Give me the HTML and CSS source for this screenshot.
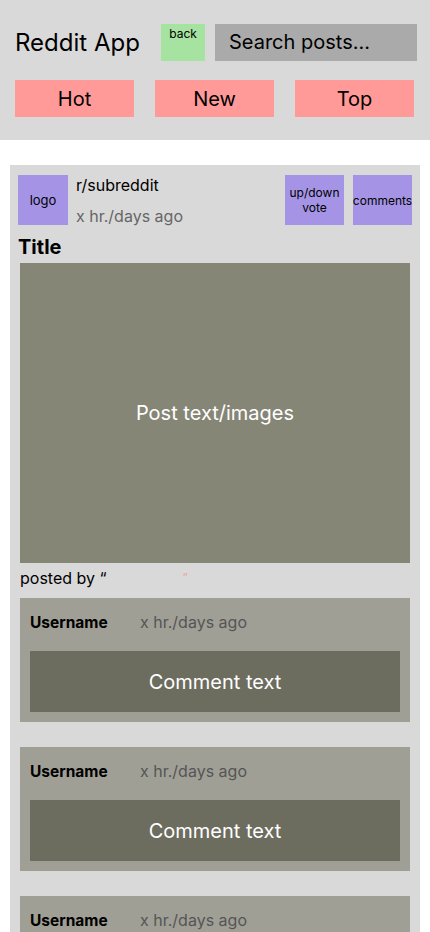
FILE: index.html
```html
<!DOCTYPE html>
<html>
<head>
<meta charset="utf-8">
<link rel="stylesheet" href="styles.css">
</head>
<body>
<header class="top">
  <div class="row1">
    <h1 class="app-title">Reddit App</h1>
    <div class="back">back</div>
    <div class="search">Search posts...</div>
  </div>
  <div class="row2">
    <div class="tab">Hot</div>
    <div class="tab">New</div>
    <div class="tab">Top</div>
  </div>
</header>
<main class="card">
  <div class="card-head">
    <div class="logo">logo</div>
    <div class="meta">
      <div class="sub">r/subreddit</div>
      <div class="time">x hr./days ago</div>
    </div>
    <div class="sq vote">up/down<br>vote</div>
    <div class="sq comments">comments</div>
  </div>
  <div class="title">Title</div>
  <div class="media">Post text/images</div>
  <div class="posted">posted by “<span class="q">”</span></div>
  <div class="comment">
    <div class="c-head"><span class="user">Username</span><span class="c-time">x hr./days ago</span></div>
    <div class="c-text">Comment text</div>
  </div>
  <div class="comment">
    <div class="c-head"><span class="user">Username</span><span class="c-time">x hr./days ago</span></div>
    <div class="c-text">Comment text</div>
  </div>
  <div class="comment">
    <div class="c-head"><span class="user">Username</span><span class="c-time">x hr./days ago</span></div>
    <div class="c-text">Comment text</div>
  </div>
</main>
</body>
</html>
```
FILE: styles.css
```css
* { box-sizing: border-box; }
body {
  margin: 0;
  background: #ffffff;
  font-family: Inter, "Noto Sans", sans-serif;
  color: #000;
}
.top {
  background: #d9d9d9;
  height: 140px;
  padding: 24px 0 0 15px;
}
.row1 {
  display: flex;
  align-items: stretch;
  height: 37px;
}
.app-title {
  margin: 0;
  width: 146px;
  flex: none;
  font-size: 24px;
  font-weight: 400;
  line-height: 37px;
}
.back {
  width: 44px;
  background: #a6e3a0;
  font-size: 12px;
  text-align: center;
  line-height: 20px;
}
.search {
  margin-left: 10px;
  width: 202px;
  background: #aaaaaa;
  font-size: 20px;
  line-height: 37px;
  padding-left: 14px;
}
.row2 {
  display: flex;
  gap: 21px;
  margin-top: 19px;
}
.tab {
  width: 119px;
  height: 37px;
  background: #ff9a99;
  font-size: 20px;
  line-height: 37px;
  padding-top: 1px;
  text-align: center;
}
.card {
  margin: 25px 10px 0;
  background: #d9d9d9;
  padding: 10px 0 40px;
}
.card-head {
  display: flex;
  padding: 0 8px;
  height: 50px;
}
.logo {
  width: 50px;
  height: 50px;
  background: #a594e6;
  font-size: 13px;
  display: flex;
  align-items: center;
  justify-content: center;
}
.meta {
  margin-left: 8px;
  flex: 1;
  font-size: 16px;
}
.sub { line-height: 20px; }
.time { color: #666; margin-top: 11px; line-height: 20px; }
.sq {
  width: 59px;
  height: 50px;
  background: #a594e6;
  font-size: 12px;
  line-height: 15px;
  display: flex;
  align-items: center;
  justify-content: center;
  text-align: center;
  white-space: nowrap;
}
.comments { margin-left: 9px; }
.title {
  padding-left: 8px;
  font-size: 20px;
  font-weight: 700;
  line-height: 24px;
  margin-top: 10px;
  margin-bottom: 4px;
}
.media {
  margin: 0 10px;
  height: 300px;
  background: #868677;
  color: #fff;
  font-size: 20px;
  display: flex;
  align-items: center;
  justify-content: center;
}
.posted {
  margin: 5px 10px 10px;
  font-size: 16px;
  line-height: 20px;
  height: 20px;
  overflow: hidden;
}
.posted .q {
  color: #f2a3a3;
  font-size: 12px;
  margin-left: 76px;
  vertical-align: 2px;
}
.comment {
  margin: 0 10px 25px;
  background: #a09f96;
  padding: 10px;
}
.c-head {
  height: 28px;
  display: flex;
  align-items: center;
  font-size: 16px;
  margin-bottom: 15px;
}
.user { font-weight: 700; width: 110px; font-size: 15.5px; }
.c-time { color: #555; }
.c-text {
  height: 61px;
  background: #6d6d5f;
  color: #fff;
  font-size: 20px;
  display: flex;
  align-items: center;
  justify-content: center;
}
```
